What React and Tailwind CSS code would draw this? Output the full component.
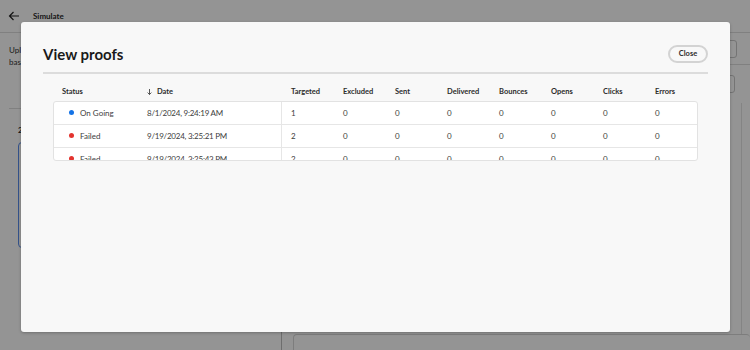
import React from "react";

const cols = "grid grid-cols-[84px_144px_repeat(8,52px)]";
const numHeads = ["Targeted", "Excluded", "Sent", "Delivered", "Bounces", "Opens", "Clicks", "Errors"];
const rows = [
  { status: "On Going", color: "bg-[#1473e6]", date: "8/1/2024, 9:24:19 AM", t: "1" },
  { status: "Failed", color: "bg-[#e3342f]", date: "9/19/2024, 3:25:21 PM", t: "2" },
  { status: "Failed", color: "bg-[#e3342f]", date: "9/19/2024, 3:25:43 PM", t: "2" },
];

export default function App() {
  return (
    <div className="relative w-[750px] h-[350px] overflow-hidden bg-white text-[#2c2c2c]" style={{ fontFamily: "Lato, 'Noto Sans', sans-serif" }}>
      {/* background page */}
      <div className="flex flex-col h-full">
        <div className="h-[33px] shrink-0 border-b border-[#dcdcdc] flex items-center pl-[8px] gap-[13px]">
          <svg width="12" height="10" viewBox="0 0 12 10" fill="none" stroke="#222" strokeWidth="1.2">
            <path d="M11 5H1.5M5.5 1L1.5 5l4 4" />
          </svg>
          <span className="text-[8px] font-bold">Simulate</span>
        </div>
        <div className="flex flex-1">
          <div className="w-[282px] shrink-0 border-r border-[#bdbdbd] pl-[9px] pr-[10px]">
            <div className="pt-[11px] text-[8px] leading-[12px] text-[#333] whitespace-nowrap overflow-hidden">
              <p>Upload a file with a list of profiles</p>
              <p>based on the segments of the journey.</p>
            </div>
            <div className="mt-[21px] border-b border-[#dcdcdc] h-[20px]" />
            <div className="pl-[9px] pt-[15px] text-[8px] font-bold">2</div>
            <div className="ml-[9px] mt-[6px] h-[106px] rounded-[4px] border-[1.5px] border-[#5a8ef0]" />
          </div>
          <div className="flex-1 flex flex-col">
            <div className="h-[32px] border-b border-[#dcdcdc] flex items-center justify-end pr-[13px]">
              <div className="w-[40px] h-[18px] rounded-[3px] border-[1.5px] border-[#c8c8c8]" />
            </div>
            <div className="h-[38px] flex items-center justify-end pr-[15px]">
              <div className="w-[40px] h-[18px] rounded-[3px] border-[1.5px] border-[#c8c8c8]" />
            </div>
            <div className="flex-1 flex justify-end pr-[8px] gap-[4px]">
              <div className="w-px bg-[#e4e4e4]" />
            </div>
            <div className="ml-[11px] h-[16px] rounded-t-[4px] border-t border-l border-[#d8d8d8]" />
          </div>
        </div>
      </div>

      {/* overlay */}
      <div className="absolute inset-0 bg-black/[0.42]" />

      {/* modal */}
      <div className="absolute left-[21px] top-[22px] w-[709px] h-[310px] bg-[#f8f8f8] rounded-[3px] shadow-[0_1px_3px_rgba(0,0,0,0.25)] flex flex-col">
        <div className="mx-[22px] mt-[23px] h-[18px] flex items-center justify-between">
          <h1 className="text-[15px] leading-[18px] font-bold text-[#1a1a1a]">View proofs</h1>
          <button className="h-[18px] w-[40px] rounded-full border-2 border-[#d3d3d3] text-[7.5px] font-bold text-[#2c2c2c] flex items-center justify-center">
            Close
          </button>
        </div>
        <div className="mx-[22px] mt-[9px] h-[2px] bg-[#dcdcdc]" />
        <div className="mx-[32px] mt-[9px]">
          <div className={`${cols} h-[18px] items-center px-px text-[7.5px] font-bold text-[#2c2c2c]`}>
            <div className="pl-[8px]">Status</div>
            <div className="pl-[9px] flex items-center gap-[5px]">
              <svg width="5" height="6" viewBox="0 0 5 6" fill="none" stroke="#444" strokeWidth="0.9">
                <path d="M2.5 0v5.5M0.6 3.6l1.9 1.9 1.9-1.9" />
              </svg>
              <span>Date</span>
            </div>
            {numHeads.map((h) => (
              <div key={h} className="pl-[9px]">{h}</div>
            ))}
          </div>
          <div className="h-[60px] overflow-hidden rounded-[3px] border border-[#e2e2e2] bg-white">
            {rows.map((r, i) => (
              <div key={i} className={`${cols} h-[23px] border-b border-[#e6e6e6] text-[8px] text-[#3d3d3d]`}>
                <div className="pl-[15px] flex items-center gap-[6px]">
                  <span className={`w-[5px] h-[5px] rounded-full ${r.color} -mt-[2px]`} />
                  <span>{r.status}</span>
                </div>
                <div className="pl-[9px] flex items-center border-r border-[#e6e6e6] tracking-[-0.03em]">{r.date}</div>
                {[r.t, "0", "0", "0", "0", "0", "0", "0"].map((v, j) => (
                  <div key={j} className="pl-[9px] flex items-center">{v}</div>
                ))}
              </div>
            ))}
          </div>
        </div>
      </div>
    </div>
  );
}
